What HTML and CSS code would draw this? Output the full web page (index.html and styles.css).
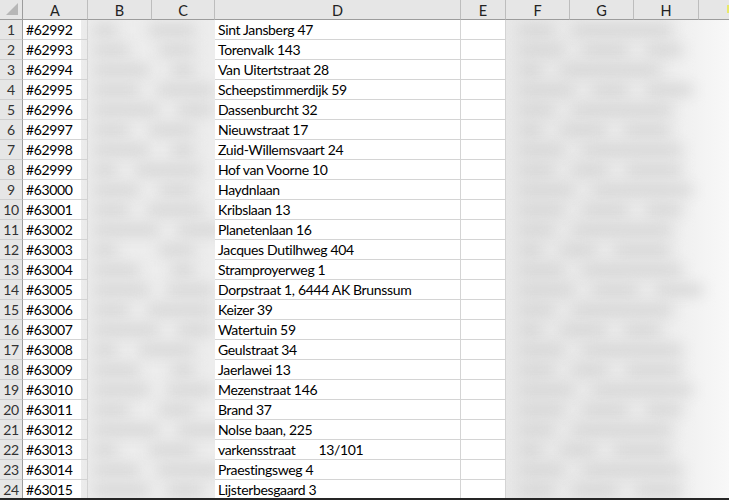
FILE: index.html
```html
<!DOCTYPE html>
<html>
<head>
<meta charset="utf-8">
<link rel="stylesheet" href="styles.css">
</head>
<body>
<div class="sheet">
  <div class="grid">
    <div class="hd corner"><span class="tri"></span></div>
    <div class="hd">A</div><div class="hd">B</div><div class="hd">C</div><div class="hd">D</div><div class="hd">E</div><div class="hd">F</div><div class="hd">G</div><div class="hd">H</div><div class="hd last"><span class="mark"></span></div>

    <div class="blur bc">
      <div class="br"><i class="b w1"></i><i class="b w3 l"></i></div>
      <div class="br"><i class="b w2"></i><i class="b w2 l"></i></div>
      <div class="br"><i class="b w4"></i><i class="b w1 l"></i></div>
      <div class="br"><i class="b w3"></i><i class="b w4 l"></i></div>
      <div class="br"><i class="b w5"></i><i class="b w2 l"></i></div>
      <div class="br"><i class="b w2"></i><i class="b w3 l"></i></div>
      <div class="br"><i class="b w4"></i><i class="b w1 l"></i></div>
      <div class="br"><i class="b w1"></i><i class="b w5 l"></i></div>
      <div class="br"><i class="b w3"></i><i class="b w2 l"></i></div>
      <div class="br"><i class="b w2"></i><i class="b w4 l"></i></div>
      <div class="br"><i class="b w5"></i><i class="b w3 l"></i></div>
      <div class="br"><i class="b w1"></i><i class="b w2 l"></i></div>
      <div class="br"><i class="b w3"></i><i class="b w1 l"></i></div>
      <div class="br"><i class="b w4"></i><i class="b w3 l"></i></div>
      <div class="br"><i class="b w2"></i><i class="b w5 l"></i></div>
      <div class="br"><i class="b w5"></i><i class="b w2 l"></i></div>
      <div class="br"><i class="b w1"></i><i class="b w4 l"></i></div>
      <div class="br"><i class="b w3"></i><i class="b w1 l"></i></div>
      <div class="br"><i class="b w4"></i><i class="b w3 l"></i></div>
      <div class="br"><i class="b w2"></i><i class="b w2 l"></i></div>
      <div class="br"><i class="b w5"></i><i class="b w4 l"></i></div>
      <div class="br"><i class="b w1"></i><i class="b w3 l"></i></div>
      <div class="br"><i class="b w3"></i><i class="b w5 l"></i></div>
      <div class="br"><i class="b w4"></i><i class="b w2 l"></i></div>
    </div>

    <div class="blur fh">
      <div class="br"><i class="b w2"></i><i class="b w6"></i></div>
      <div class="br"><i class="b w3"></i><i class="b w3"></i><i class="b w2"></i></div>
      <div class="br"><i class="b w1"></i><i class="b w6"></i></div>
      <div class="br"><i class="b w4"></i><i class="b w2"></i><i class="b w3"></i></div>
      <div class="br"><i class="b w2"></i><i class="b w6"></i></div>
      <div class="br"><i class="b w1"></i><i class="b w3"></i><i class="b w3"></i></div>
      <div class="br"><i class="b w3"></i><i class="b w6"></i></div>
      <div class="br"><i class="b w2"></i><i class="b w2"></i><i class="b w4"></i></div>
      <div class="br"><i class="b w4"></i><i class="b w6"></i></div>
      <div class="br"><i class="b w3"></i><i class="b w3"></i><i class="b w2"></i></div>
      <div class="br"><i class="b w2"></i><i class="b w6"></i></div>
      <div class="br"><i class="b w1"></i><i class="b w2"></i><i class="b w4"></i></div>
      <div class="br"><i class="b w3"></i><i class="b w6"></i></div>
      <div class="br"><i class="b w4"></i><i class="b w3"></i><i class="b w3"></i></div>
      <div class="br"><i class="b w2"></i><i class="b w6"></i></div>
      <div class="br"><i class="b w1"></i><i class="b w3"></i><i class="b w2"></i></div>
      <div class="br"><i class="b w3"></i><i class="b w6"></i></div>
      <div class="br"><i class="b w2"></i><i class="b w2"></i><i class="b w4"></i></div>
      <div class="br"><i class="b w4"></i><i class="b w6"></i></div>
      <div class="br"><i class="b w3"></i><i class="b w3"></i><i class="b w2"></i></div>
      <div class="br"><i class="b w2"></i><i class="b w6"></i></div>
      <div class="br"><i class="b w1"></i><i class="b w2"></i><i class="b w4"></i></div>
      <div class="br"><i class="b w3"></i><i class="b w6"></i></div>
      <div class="br"><i class="b w2"></i><i class="b w3"></i><i class="b w3"></i></div>
    </div>

    <div class="rh">1</div><div class="c">#62992</div><div class="c d">Sint Jansberg 47</div><div class="c"></div>
    <div class="rh">2</div><div class="c">#62993</div><div class="c d">Torenvalk 143</div><div class="c"></div>
    <div class="rh">3</div><div class="c">#62994</div><div class="c d">Van Uitertstraat 28</div><div class="c"></div>
    <div class="rh">4</div><div class="c">#62995</div><div class="c d">Scheepstimmerdijk 59</div><div class="c"></div>
    <div class="rh">5</div><div class="c">#62996</div><div class="c d">Dassenburcht 32</div><div class="c"></div>
    <div class="rh">6</div><div class="c">#62997</div><div class="c d">Nieuwstraat 17</div><div class="c"></div>
    <div class="rh">7</div><div class="c">#62998</div><div class="c d">Zuid-Willemsvaart 24</div><div class="c"></div>
    <div class="rh">8</div><div class="c">#62999</div><div class="c d">Hof van Voorne 10</div><div class="c"></div>
    <div class="rh">9</div><div class="c">#63000</div><div class="c d">Haydnlaan</div><div class="c"></div>
    <div class="rh">10</div><div class="c">#63001</div><div class="c d">Kribslaan 13</div><div class="c"></div>
    <div class="rh">11</div><div class="c">#63002</div><div class="c d">Planetenlaan 16</div><div class="c"></div>
    <div class="rh">12</div><div class="c">#63003</div><div class="c d">Jacques Dutilhweg 404</div><div class="c"></div>
    <div class="rh">13</div><div class="c">#63004</div><div class="c d">Stramproyerweg 1</div><div class="c"></div>
    <div class="rh">14</div><div class="c">#63005</div><div class="c d">Dorpstraat 1, 6444 AK Brunssum</div><div class="c"></div>
    <div class="rh">15</div><div class="c">#63006</div><div class="c d">Keizer 39</div><div class="c"></div>
    <div class="rh">16</div><div class="c">#63007</div><div class="c d">Watertuin 59</div><div class="c"></div>
    <div class="rh">17</div><div class="c">#63008</div><div class="c d">Geulstraat 34</div><div class="c"></div>
    <div class="rh">18</div><div class="c">#63009</div><div class="c d">Jaerlawei 13</div><div class="c"></div>
    <div class="rh">19</div><div class="c">#63010</div><div class="c d">Mezenstraat 146</div><div class="c"></div>
    <div class="rh">20</div><div class="c">#63011</div><div class="c d">Brand 37</div><div class="c"></div>
    <div class="rh">21</div><div class="c">#63012</div><div class="c d">Nolse baan, 225</div><div class="c"></div>
    <div class="rh">22</div><div class="c">#63013</div><div class="c d">varkensstraat<span class="tab">13/101</span></div><div class="c"></div>
    <div class="rh">23</div><div class="c">#63014</div><div class="c d">Praestingsweg 4</div><div class="c"></div>
    <div class="rh">24</div><div class="c">#63015</div><div class="c d">Lijsterbesgaard 3</div><div class="c"></div>
  </div>
  <div class="edge"></div>
</div>
</body>
</html>
```

FILE: styles.css
```css
* { box-sizing: border-box; }
html, body { margin: 0; padding: 0; background: #fff; }
body { width: 729px; height: 500px; overflow: hidden; font-family: "Lato", "Open Sans", sans-serif; }
.sheet { width: 729px; height: 500px; display: flex; flex-direction: column; }
.grid {
  height: 498px;
  overflow: hidden;
  display: grid;
  grid-template-columns: 23px 65px 64px 63px 246px 45px 64px 64px 65px 30px;
  grid-template-rows: 20px repeat(24, 20px);
  grid-auto-flow: row dense;
}
.edge { height: 2px; background: #262626; }
.hd {
  background: #e6e6e6;
  border-right: 1px solid #bdbdbd;
  border-bottom: 1px solid #9c9c9c;
  color: #222;
  font-size: 14.5px;
  display: flex; align-items: center; justify-content: center;
  padding-top: 1px;
}
.hd.last { border-right: none; justify-content: flex-end; align-items: flex-start; padding-top: 5px; }
.mark { width: 2px; height: 8px; background: #e8e86a; }
.corner { position: relative; border-right: 1px solid #9c9c9c; }
.tri {
  position: absolute; right: 4px; bottom: 4px;
  width: 0; height: 0;
  border-style: solid; border-width: 0 0 12px 12px;
  border-color: transparent transparent #b7b7b7 transparent;
}
.rh {
  grid-column: 1;
  background: #e6e6e6;
  border-right: 1px solid #9c9c9c;
  border-bottom: 1px solid #cfcfcf;
  color: #333;
  font-size: 14px;
  letter-spacing: -0.3px;
  display: flex; align-items: flex-end; justify-content: center;
  padding-bottom: 1px;
  line-height: 17px;
}
.c {
  border-right: 1px solid #d4d4d4;
  border-bottom: 1px solid #d4d4d4;
  font-size: 14px;
  letter-spacing: -0.35px;
  color: #000;
  padding: 0 3px 1px 3px;
  display: flex; align-items: flex-end;
  line-height: 17px;
  white-space: nowrap;
}
.c.d { grid-column: 5; padding-left: 3px; }
.c.d + .c { grid-column: 6; }
.tab { margin-left: 23px; }
.blur {
  overflow: hidden;
  display: flex; flex-direction: column;
}
.bc { grid-column: 3 / 5; grid-row: 2 / 26; background: #ededed; margin-left: -7px; }
.fh { grid-column: 7 / 11; grid-row: 2 / 26; background: linear-gradient(90deg, #e8e8e8 0%, #ececec 70%, #f8f8f8 100%); }
.br { height: 20px; flex: none; display: flex; align-items: center; gap: 18px; padding-left: 12px; filter: blur(7px); }
.bc .b.l { margin-left: auto; margin-right: 20px; }
.b { display: block; height: 10px; background: #d2d2d2; flex: none; }
.w1 { width: 24px; } .w2 { width: 36px; } .w3 { width: 46px; } .w4 { width: 56px; } .w5 { width: 66px; } .w6 { width: 100px; }
```
